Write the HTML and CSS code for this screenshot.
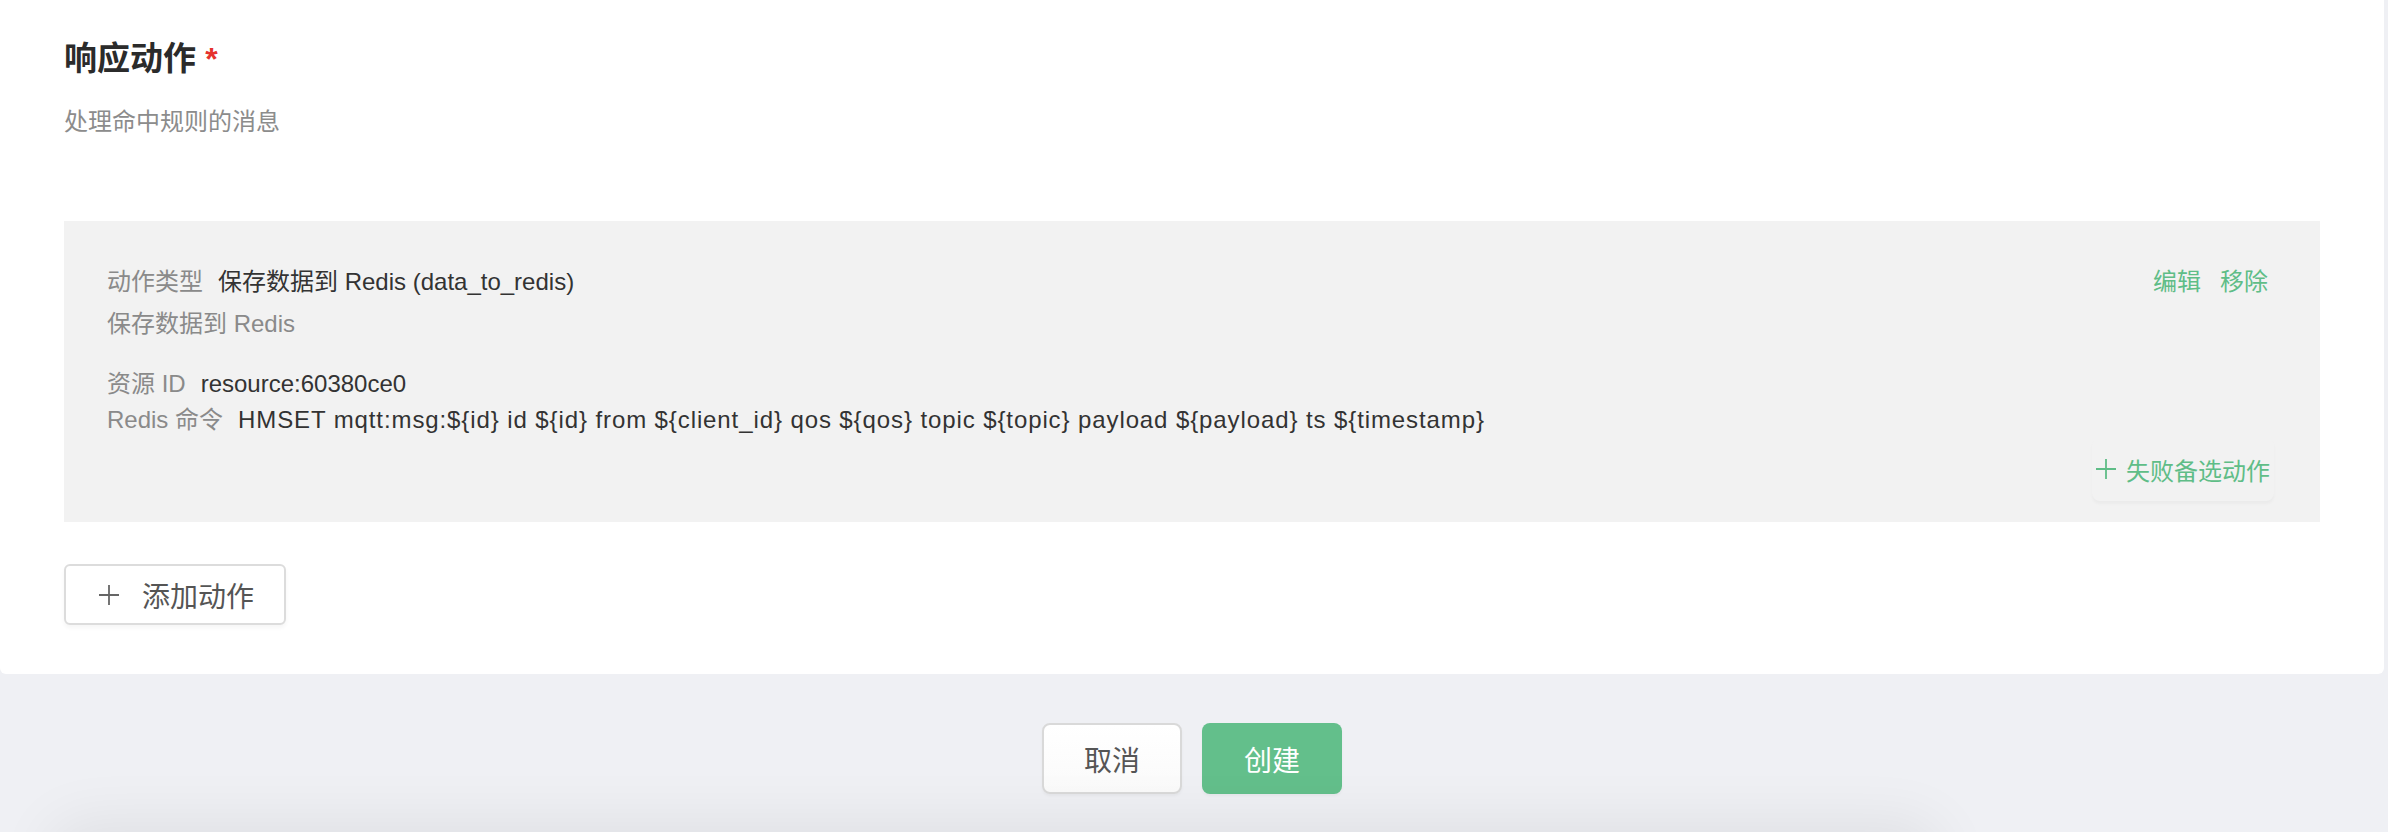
FILE: index.html
```html
<!DOCTYPE html>
<html lang="zh-CN">
<head>
<meta charset="utf-8">
<title>响应动作</title>
<link rel="stylesheet" href="styles.css">
</head>
<body>
<div class="page">
  <section class="card">
    <h2 class="title">响应动作 <span class="req">*</span></h2>
    <p class="subtitle">处理命中规则的消息</p>

    <div class="action-panel">
      <div class="row head">
        <div class="line"><span class="label">动作类型</span><span class="value">保存数据到 Redis (data_to_redis)</span></div>
        <div class="links"><a class="link">编辑</a><a class="link">移除</a></div>
      </div>
      <div class="desc">保存数据到 Redis</div>
      <div class="params">
        <div class="line"><span class="label">资源 ID</span><span class="value">resource:60380ce0</span></div>
        <div class="line"><span class="label">Redis 命令</span><span class="value cmd">HMSET mqtt:msg:${id} id ${id} from ${client_id} qos ${qos} topic ${topic} payload ${payload} ts ${timestamp}</span></div>
      </div>
      <div class="fallback-row">
        <button class="fallback-btn"><svg class="plus" viewBox="0 0 20 20" width="20" height="20"><path d="M10 0v20M0 10h20" stroke="currentColor" stroke-width="1.8" fill="none"/></svg><span>失败备选动作</span></button>
      </div>
    </div>

    <button class="add-btn"><svg class="plus" viewBox="0 0 20 20" width="20" height="20"><path d="M10 0v20M0 10h20" stroke="currentColor" stroke-width="1.8" fill="none"/></svg><span>添加动作</span></button>
  </section>

  <div class="footer">
    <button class="btn btn-cancel">取消</button>
    <button class="btn btn-primary">创建</button>
  </div>
</div>
<div class="bottom-shade"></div>
</body>
</html>
```

FILE: styles.css
```css
html, body {
  margin: 0;
  padding: 0;
  overflow: hidden;
}
body {
  background: #eff0f4;
  font-family: "Liberation Sans", "Noto Sans CJK SC", sans-serif;
  color: #333;
  width: 2388px;
  height: 832px;
}
.page {
  display: flex;
  flex-direction: column;
}
.card {
  background: #fff;
  margin-right: 4px;
  border-radius: 0 0 6px 6px;
  padding: 37px 64px 49px;
  display: flex;
  flex-direction: column;
  align-items: flex-start;
}
.title {
  margin: 0;
  font-size: 33px;
  line-height: 44px;
  font-weight: 700;
  color: #2b2b2b;
}
.req {
  color: #e5322d;
  font-size: 32px;
  font-weight: 700;
}
.subtitle {
  margin: 24px 0 0;
  font-size: 24px;
  line-height: 34px;
  color: #8c8c8c;
}
.action-panel {
  align-self: stretch;
  margin-top: 82px;
  background: #f2f2f2;
  padding: 43px 46px 21px 43px;
  font-size: 24px;
  line-height: 36px;
}
.row.head {
  display: flex;
  justify-content: space-between;
  align-items: center;
}
.line {
  display: flex;
  align-items: center;
  white-space: nowrap;
}
.label {
  color: #8a8a8a;
  margin-right: 15px;
}
.value {
  color: #333;
}
.value.cmd {
  letter-spacing: 0.9px;
}
.links {
  display: flex;
  gap: 19px;
  margin-right: 6px;
}
.link {
  color: #5fbd87;
  cursor: pointer;
}
.desc {
  margin-top: 6px;
  color: #8a8a8a;
}
.params {
  margin-top: 24px;
}
.fallback-row {
  display: flex;
  justify-content: flex-end;
  margin-top: -1px;
}
.fallback-btn {
  display: flex;
  align-items: center;
  gap: 10px;
  height: 64px;
  padding: 0 4px;
  border: none;
  border-radius: 8px;
  background: #f2f2f2;
  box-shadow: 0 3px 3px rgba(0, 0, 0, 0.03);
  color: #5fbd87;
  font-family: inherit;
  font-size: 24px;
}
.add-btn {
  margin-top: 42px;
  width: 222px;
  height: 61px;
  display: flex;
  align-items: center;
  padding: 0 0 0 33px;
  gap: 23px;
  border: 2px solid #dcdcdc;
  border-radius: 6px;
  background: #fff;
  box-shadow: 0 3px 4px rgba(0, 0, 0, 0.04);
  color: #555;
  font-family: inherit;
  font-size: 28px;
}
.add-btn .plus {
  color: #666;
}
.footer {
  display: flex;
  justify-content: center;
  gap: 20px;
  margin-top: 49px;
  padding-right: 4px;
}
.btn {
  height: 71px;
  width: 140px;
  border-radius: 8px;
  font-family: inherit;
  font-size: 28px;
}
.btn-cancel {
  border: 2px solid #d9d9d9;
  background: linear-gradient(#fff, #fafafa);
  color: #555;
  box-shadow: 0 2px 3px rgba(0, 0, 0, 0.04);
}
.btn-primary {
  border: none;
  background: #63bf8b;
  color: #fff;
  box-shadow: 0 2px 3px rgba(0, 0, 0, 0.04);
}
.bottom-shade {
  position: fixed;
  left: 60px;
  width: 1870px;
  bottom: -120px;
  height: 120px;
  border-radius: 20px;
  background: #e2e3e6;
  box-shadow: 0 0 60px 10px rgba(0, 0, 0, 0.07);
}
```
